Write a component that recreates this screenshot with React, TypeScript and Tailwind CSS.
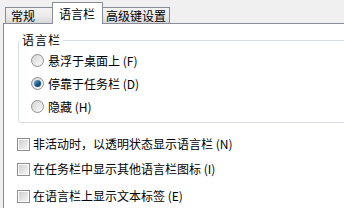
import React from "react";

const font = { fontFamily: '"Noto Sans CJK SC", "Noto Sans", sans-serif' };

function Radio({ checked }: { checked?: boolean }) {
  return (
    <div className="w-[13px] h-[13px] rounded-full border border-[#8e8f8f] bg-gradient-to-br from-[#d4d4d4] to-[#fbfbfb] flex items-center justify-center shrink-0">
      {checked && (
        <div className="w-[7px] h-[7px] rounded-full bg-gradient-to-br from-[#7fb9e0] via-[#1c5f8e] to-[#0d3b5e]" />
      )}
    </div>
  );
}

function Checkbox() {
  return (
    <div className="w-[13px] h-[13px] border border-[#8f8f8f] bg-white p-[1px] shrink-0">
      <div className="w-full h-full bg-gradient-to-br from-[#cfcfcf] to-[#f5f5f5]" />
    </div>
  );
}

export default function App() {
  const radios = [
    { label: "悬浮于桌面上", key: "F", checked: false },
    { label: "停靠于任务栏", key: "D", checked: true },
    { label: "隐藏", key: "H", checked: false },
  ];

  return (
    <div
      className="w-[344px] h-[208px] bg-[#f0f0f0] overflow-hidden flex flex-col text-[12px] leading-[14px] text-black"
      style={font}
    >
      {/* Tabs */}
      <div className="h-[23px] flex items-end pl-[5px] shrink-0">
        <div className="w-[48px] h-[16px] border border-b-0 border-[#898c95] bg-gradient-to-b from-[#f3f3f3] via-[#ebebeb] to-[#d8d8d8] pl-[5px] flex items-center">
          常规
        </div>
        <div className="relative z-10 -ml-px w-[51px] h-[22px] -mb-px border border-b-0 border-[#898c95] bg-white pl-[6px] pb-[3px] flex items-end">
          语言栏
        </div>
        <div className="-ml-[2px] w-[69px] h-[16px] border border-b-0 border-[#898c95] bg-gradient-to-b from-[#f3f3f3] via-[#ebebeb] to-[#d8d8d8] pl-[4px] flex items-center">
          高级键设置
        </div>
      </div>

      {/* Panel */}
      <div className="ml-[3px] flex-1 border-l border-t border-[#898c95] bg-white pl-[14px] pt-[9px]">
        <fieldset className="w-[350px] border border-[#d5dfe5] rounded-[3px] px-[12px] pt-[2px] pb-[4px]">
          <legend className="ml-[-11px] px-[2px] leading-[14px] tracking-[1px]">语言栏</legend>
          {radios.map((r) => (
            <div key={r.key} className="h-[23px] flex items-center gap-[4px]">
              <Radio checked={r.checked} />
              <span>
                {r.label} ({r.key})
              </span>
            </div>
          ))}
        </fieldset>

        <div className="flex flex-col -ml-px">
          <div className="mt-[13px] h-[16px] flex items-center gap-[3px]">
            <Checkbox />
            <span>非活动时，以透明状态显示语言栏 (N)</span>
          </div>
          <div className="mt-[9px] h-[16px] flex items-center gap-[3px]">
            <Checkbox />
            <span>在任务栏中显示其他语言栏图标 (I)</span>
          </div>
          <div className="mt-[11px] h-[16px] flex items-center gap-[3px]">
            <Checkbox />
            <span>在语言栏上显示文本标签 (E)</span>
          </div>
        </div>
      </div>
    </div>
  );
}
